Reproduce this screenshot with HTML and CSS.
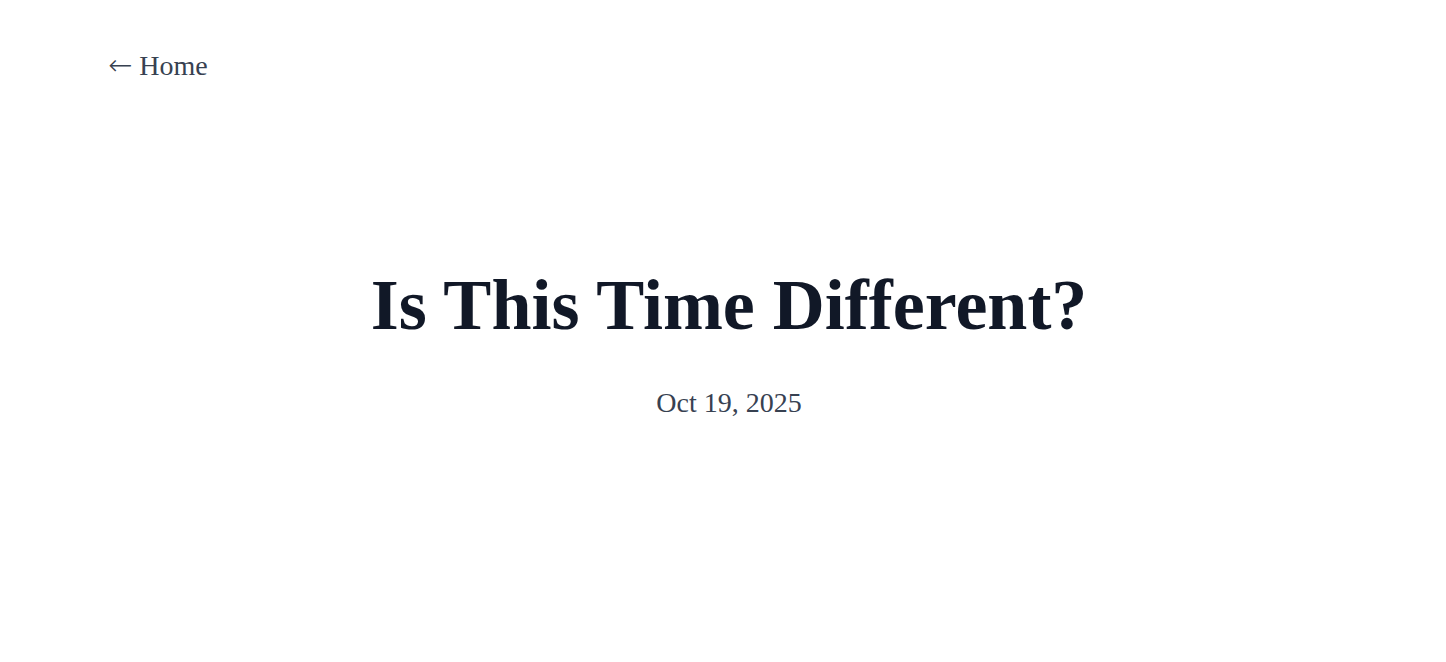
FILE: index.html
```html
<!DOCTYPE html>
<html lang="en">
<head>
<meta charset="utf-8">
<title>Is This Time Different?</title>
<link rel="stylesheet" href="styles.css">
</head>
<body>
<div class="page">
  <nav class="topnav">
    <a class="back" href="#"><span class="arrow">←</span><span class="label">Home</span></a>
  </nav>
  <header class="post-header">
    <h1 class="title">Is This Time Different?</h1>
    <div class="date">Oct 19, 2025</div>
  </header>
</div>
</body>
</html>
```
FILE: styles.css
```css
html, body {
  margin: 0;
  padding: 0;
  background: #ffffff;
}
body {
  font-family: "Liberation Serif", "Times New Roman", serif;
  color: #374151;
}
.page {
  padding: 48px 108px 0 108px;
  display: flex;
  flex-direction: column;
}
.topnav {
  display: flex;
}
.back {
  display: flex;
  align-items: baseline;
  gap: 7px;
  color: #374151;
  text-decoration: none;
  font-size: 28px;
  line-height: 34px;
}
.arrow {
  font-family: "DejaVu Sans", sans-serif;
  font-size: 29px;
  font-weight: 200;
}
.post-header {
  display: flex;
  flex-direction: column;
  align-items: center;
  padding-left: 12px;
  margin-top: 177px;
}
.title {
  margin: 0;
  font-size: 72px;
  line-height: 90px;
  font-weight: 700;
  color: #111827;
}
.date {
  margin-top: 36px;
  font-size: 28px;
  line-height: 34px;
  color: #374151;
}
```
